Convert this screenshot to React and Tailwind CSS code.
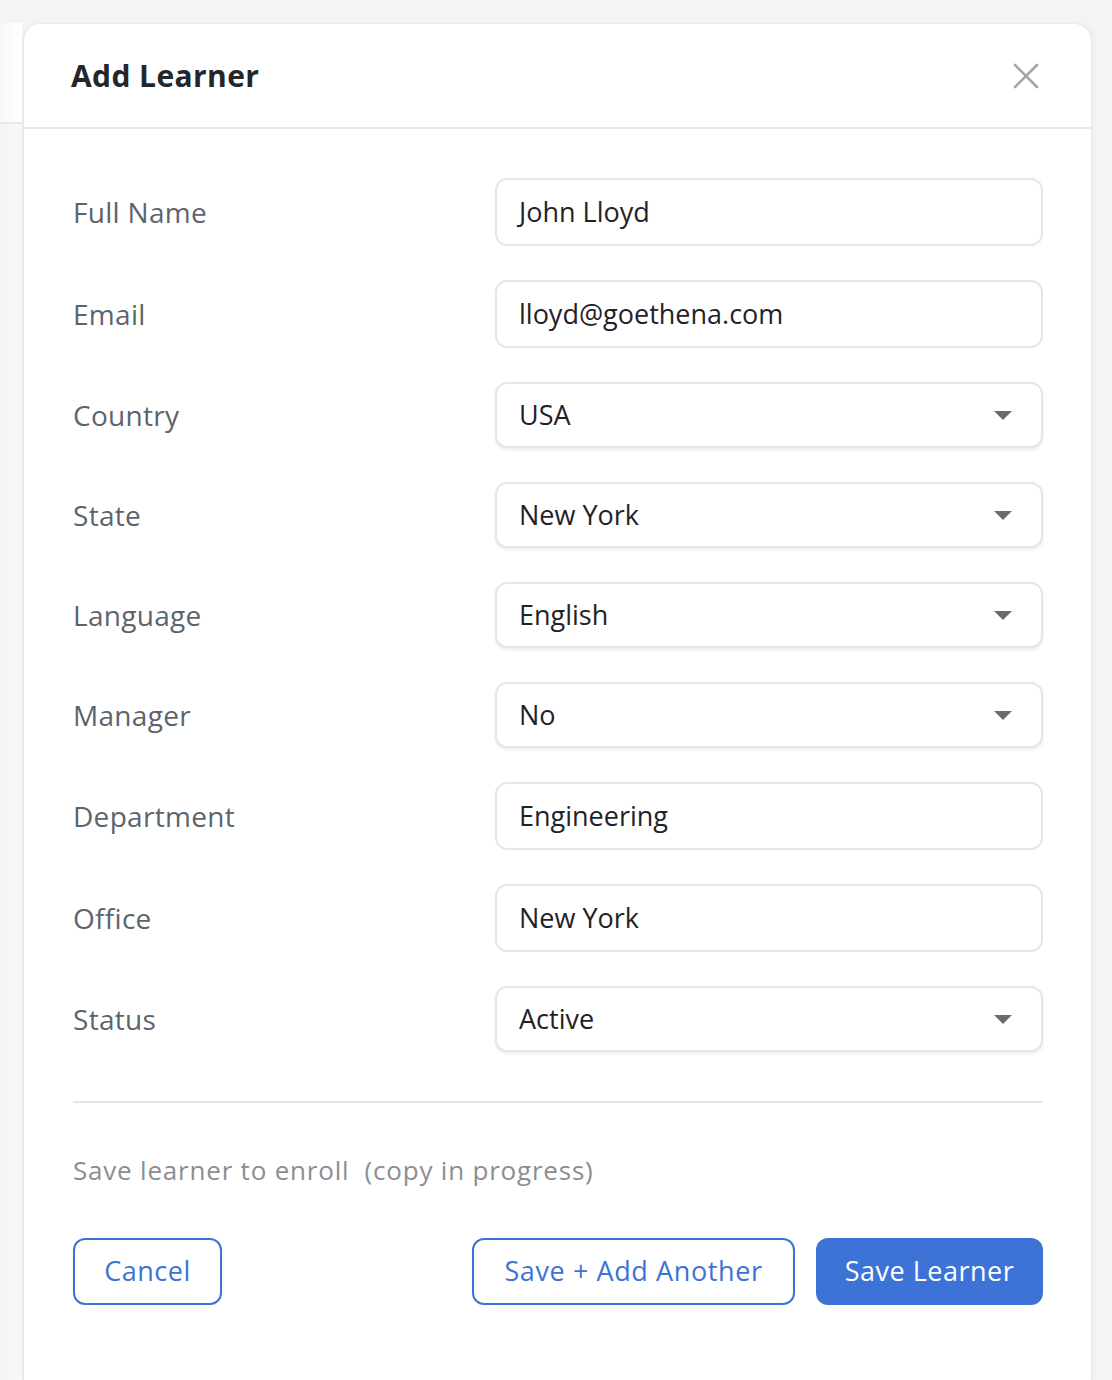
import React from 'react';

const fields = [
  { label: 'Full Name', value: 'John Lloyd', select: false },
  { label: 'Email', value: 'lloyd@goethena.com', select: false },
  { label: 'Country', value: 'USA', select: true },
  { label: 'State', value: 'New York', select: true },
  { label: 'Language', value: 'English', select: true },
  { label: 'Manager', value: 'No', select: true },
  { label: 'Department', value: 'Engineering', select: false },
  { label: 'Office', value: 'New York', select: false },
  { label: 'Status', value: 'Active', select: true },
];

function Caret() {
  return (
    <svg width="18" height="9" viewBox="0 0 18 9" className="shrink-0">
      <path d="M0 0 H18 L9 9 Z" fill="#6b6b6b" />
    </svg>
  );
}

function FieldRow({ label, value, select }) {
  return (
    <div className="grid grid-cols-[422px_1fr] items-center">
      <label className="text-[28px] tracking-[0.3px] text-[#5d646d]">{label}</label>
      {select ? (
        <div className="h-[66px] flex items-center justify-between pl-[22px] pr-[29px] rounded-[12px] border-2 border-[#e6e6e6] bg-white shadow-[0_2px_3px_rgba(0,0,0,0.08)]">
          <span className="text-[27px] text-[#1f2328]">{value}</span>
          <Caret />
        </div>
      ) : (
        <div className="h-[68px] flex items-center pl-[22px] pr-6 rounded-[12px] border-2 border-[#e6e6e6] bg-white">
          <span className="text-[27px] text-[#1f2328]">{value}</span>
        </div>
      )}
    </div>
  );
}

export default function App() {
  return (
    <div
      className="min-h-[1380px] bg-[#f4f4f4] flex pt-[23px]"
      style={{ fontFamily: '"Open Sans", Lato, sans-serif' }}
    >
      {/* page behind the dialog */}
      <div className="w-[22px] shrink-0 flex flex-col">
        <div className="h-[101px] bg-gradient-to-r from-[#f7f7f7] to-white border-b-2 border-[#e8e8e8]" />
        <div className="flex-1 bg-gradient-to-r from-[#f3f4f6] to-[#f7f8fa]" />
      </div>

      {/* dialog */}
      <div className="w-[1070px] shrink-0 bg-white rounded-t-[18px] border-l-2 border-t border-r border-[#e9e9e9] flex flex-col shadow-[2px_0_6px_rgba(0,0,0,0.03)]">
        <div className="h-[105px] flex items-center justify-between pl-[47px] pr-[52px] border-b-2 border-[#e6e6e6]">
          <h1 className="text-[30px] font-bold tracking-[0.4px] text-[#23262b]">Add Learner</h1>
          <button className="w-[26px] h-[26px] flex items-center justify-center">
            <svg width="26" height="26" viewBox="0 0 26 26">
              <path d="M2 2 L24 24 M24 2 L2 24" stroke="#a2a6aa" strokeWidth="2.6" strokeLinecap="round" />
            </svg>
          </button>
        </div>

        <div className="pt-[49px] pl-[49px] pr-[48px] flex flex-col">
          <div className="flex flex-col gap-[34px]">
            {fields.map((f) => (
              <FieldRow key={f.label} {...f} />
            ))}
          </div>

          <hr className="mt-[49px] border-t-2 border-[#e6e6e6]" />

          <p className="mt-[48px] text-[26px] tracking-[0.8px] text-[#8a8e93]">
            Save learner to enroll&nbsp; (copy in progress)
          </p>

          <div className="mt-[48px] flex items-center">
            <button className="h-[67px] w-[149px] rounded-[12px] border-2 border-[#3d72d6] text-[#3d72d6] text-[27px] tracking-[0.5px]">
              Cancel
            </button>
            <div className="flex-1" />
            <button className="h-[67px] w-[323px] rounded-[12px] border-2 border-[#3d72d6] text-[#3d72d6] text-[27px] tracking-[0.6px]">
              Save + Add Another
            </button>
            <button className="ml-[21px] h-[67px] w-[227px] rounded-[12px] bg-[#3d72d6] text-white text-[27px] tracking-[0.5px]">
              Save Learner
            </button>
          </div>
        </div>
      </div>
    </div>
  );
}
